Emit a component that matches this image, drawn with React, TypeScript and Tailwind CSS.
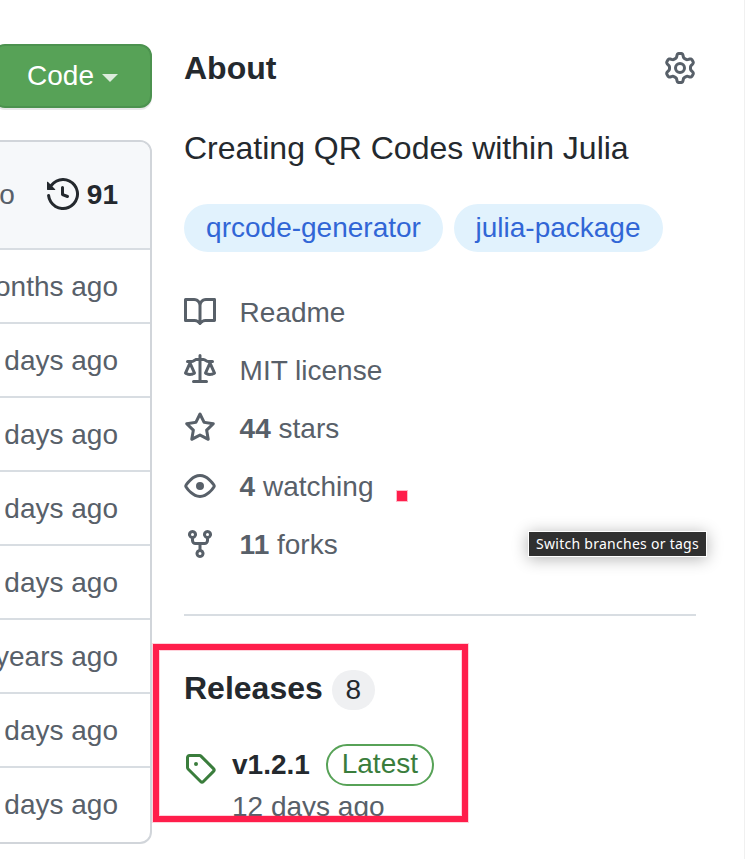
import type { ReactNode } from "react";

const paths = {
  gear: "M7.429 1.525a6.593 6.593 0 011.142 0c.036.003.108.036.137.146l.289 1.105c.147.56.55.967.997 1.189.174.086.341.183.501.29.417.278.97.423 1.53.27l1.102-.303c.11-.03.175.016.195.046.219.31.41.641.573.989.014.031.022.11-.059.19l-.815.806c-.411.406-.562.957-.53 1.456a4.588 4.588 0 010 .582c-.032.499.119 1.05.53 1.456l.815.806c.08.08.073.159.059.19a6.494 6.494 0 01-.573.99c-.02.029-.086.074-.195.045l-1.103-.303c-.559-.153-1.112-.008-1.529.27-.16.107-.327.204-.5.29-.449.222-.851.628-.998 1.189l-.289 1.105c-.029.11-.101.143-.137.146a6.613 6.613 0 01-1.142 0c-.036-.003-.108-.037-.137-.146l-.289-1.105c-.147-.56-.55-.967-.997-1.189a4.502 4.502 0 01-.501-.29c-.417-.278-.97-.423-1.53-.27l-1.102.303c-.11.03-.175-.016-.195-.046a6.492 6.492 0 01-.573-.989c-.014-.031-.022-.11.059-.19l.815-.806c.411-.406.562-.957.53-1.456a4.587 4.587 0 010-.582c.032-.499-.119-1.05-.53-1.456l-.815-.806c-.08-.08-.073-.159-.059-.19a6.44 6.44 0 01.573-.99c.02-.029.086-.075.195-.045l1.103.303c.559.153 1.112.008 1.529-.27.16-.107.327-.204.5-.29.449-.222.851-.628.998-1.189l.289-1.105c.029-.11.101-.143.137-.146zM8 0c-.236 0-.47.01-.701.03-.743.065-1.29.615-1.458 1.261l-.29 1.106c-.017.066-.078.158-.211.224a5.994 5.994 0 00-.668.386c-.123.082-.233.09-.3.071L3.27 2.776c-.644-.177-1.392.02-1.82.63a7.977 7.977 0 00-.704 1.217c-.315.675-.111 1.422.363 1.891l.815.806c.05.048.098.147.088.294a6.084 6.084 0 000 .772c.01.147-.038.246-.088.294l-.815.806c-.474.469-.678 1.216-.363 1.891.2.428.436.835.704 1.218.428.609 1.176.806 1.82.63l1.103-.303c.066-.019.176-.011.299.071.213.143.436.272.668.386.133.066.194.158.212.224l.289 1.106c.169.646.715 1.196 1.458 1.26a8.094 8.094 0 001.402 0c.743-.064 1.29-.614 1.458-1.26l.29-1.106c.017-.066.078-.158.211-.224a5.98 5.98 0 00.668-.386c.123-.082.233-.09.3-.071l1.102.302c.644.177 1.392-.02 1.82-.63.268-.382.505-.789.704-1.217.315-.675.111-1.422-.364-1.891l-.814-.806c-.05-.048-.098-.147-.088-.294a6.1 6.1 0 000-.772c-.01-.147.039-.246.088-.294l.814-.806c.475-.469.679-1.216.364-1.891a7.992 7.992 0 00-.704-1.218c-.428-.609-1.176-.806-1.82-.63l-1.103.303c-.066.019-.176.011-.299-.071a5.991 5.991 0 00-.668-.386c-.133-.066-.194-.158-.212-.224L10.16 1.29C9.99.645 9.444.095 8.701.031A8.094 8.094 0 008 0zm1.5 8a1.5 1.5 0 11-3 0 1.5 1.5 0 013 0zM11 8a3 3 0 11-6 0 3 3 0 016 0z",
  history:
    "M1.643 3.143L.427 1.927A.25.25 0 000 2.104V5.75c0 .138.112.25.25.25h3.646a.25.25 0 00.177-.427L2.715 4.215a6.5 6.5 0 11-1.18 4.458.75.75 0 10-1.493.154 8.001 8.001 0 101.6-5.684zM7.75 4a.75.75 0 01.75.75v2.992l2.028.812a.75.75 0 01-.557 1.392l-2.5-1A.75.75 0 017 8.25v-3.5A.75.75 0 017.75 4z",
  book: "M0 1.75A.75.75 0 01.75 1h4.253c1.227 0 2.317.59 3 1.501A3.744 3.744 0 0111.006 1h4.245a.75.75 0 01.75.75v10.5a.75.75 0 01-.75.75h-4.507a2.25 2.25 0 00-1.591.659l-.622.621a.75.75 0 01-1.06 0l-.622-.621A2.25 2.25 0 005.258 13H.75a.75.75 0 01-.75-.75V1.75zm8.755 3a2.25 2.25 0 012.25-2.25H14.5v9h-3.757c-.71 0-1.4.201-1.992.572l.004-7.322zm-1.504 7.324l.004-5.073-.002-2.253A2.25 2.25 0 005.003 2.5H1.5v9h3.757a3.75 3.75 0 011.994.574z",
  law: "M8.75.75a.75.75 0 00-1.5 0V2h-.984c-.305 0-.604.08-.869.23l-1.288.737A.25.25 0 013.984 3H1.75a.75.75 0 000 1.5h.428L.066 9.192a.75.75 0 00.154.838l.53-.53-.53.53v.001l.002.002.002.002.006.006.016.015.045.04a3.514 3.514 0 00.686.45A4.492 4.492 0 003 11c.88 0 1.556-.22 2.023-.454a3.515 3.515 0 00.686-.45l.045-.04.016-.015.006-.006.002-.002.001-.002L5.25 9.5l.53.53a.75.75 0 00.154-.838L3.822 4.5h.162c.305 0 .604-.08.869-.23l1.289-.737a.25.25 0 01.124-.033h.984V13h-2.5a.75.75 0 000 1.5h6.5a.75.75 0 000-1.5h-2.5V3.5h.984a.25.25 0 01.124.033l1.29.736c.264.152.563.231.868.231h.162l-2.112 4.692a.75.75 0 00.154.838l.53-.53-.53.53v.001l.002.002.002.002.006.006.016.015.045.04a3.517 3.517 0 00.686.45A4.492 4.492 0 0013 11c.88 0 1.556-.22 2.023-.454a3.512 3.512 0 00.686-.45l.045-.04.01-.01.006-.005.006-.006.002-.002.001-.002-.529-.531.53.53a.75.75 0 00.154-.838L13.823 4.5h.427a.75.75 0 000-1.5h-2.234a.25.25 0 01-.124-.033l-1.29-.736A1.75 1.75 0 009.735 2H8.75V.75zM1.695 9.227c.285.135.718.273 1.305.273s1.02-.138 1.305-.273L3 6.327l-1.305 2.9zm10 0c.285.135.718.273 1.305.273s1.02-.138 1.305-.273L13 6.327l-1.305 2.9z",
  star: "M8 .25a.75.75 0 01.673.418l1.882 3.815 4.21.612a.75.75 0 01.416 1.279l-3.046 2.97.719 4.192a.75.75 0 01-1.088.791L8 12.347l-3.766 1.98a.75.75 0 01-1.088-.79l.72-4.194L.818 6.374a.75.75 0 01.416-1.28l4.21-.611L7.327.668A.75.75 0 018 .25zm0 2.445L6.615 5.5a.75.75 0 01-.564.41l-3.097.45 2.24 2.184a.75.75 0 01.216.664l-.528 3.084 2.769-1.456a.75.75 0 01.698 0l2.77 1.456-.53-3.084a.75.75 0 01.216-.664l2.24-2.183-3.096-.45a.75.75 0 01-.564-.41L8 2.694v.001z",
  eye: "M1.679 7.932c.412-.621 1.242-1.75 2.366-2.717C5.175 4.242 6.527 3.5 8 3.5c1.473 0 2.824.742 3.955 1.715 1.124.967 1.954 2.096 2.366 2.717a.119.119 0 010 .136c-.412.621-1.242 1.75-2.366 2.717C10.825 11.758 9.473 12.5 8 12.5c-1.473 0-2.824-.742-3.955-1.715C2.92 9.818 2.09 8.69 1.679 8.068a.119.119 0 010-.136zM8 2c-1.981 0-3.67.992-4.933 2.078C1.797 5.169.88 6.423.43 7.1a1.619 1.619 0 000 1.798c.45.678 1.367 1.932 2.637 3.024C4.329 13.008 6.019 14 8 14c1.981 0 3.67-.992 4.933-2.078 1.27-1.091 2.187-2.345 2.637-3.023a1.619 1.619 0 000-1.798c-.45-.678-1.367-1.932-2.637-3.023C11.671 2.992 9.981 2 8 2zm0 8a2 2 0 100-4 2 2 0 000 4z",
  fork: "M5 3.25a.75.75 0 11-1.5 0 .75.75 0 011.5 0zm0 2.122a2.25 2.25 0 10-1.5 0v.878A2.25 2.25 0 005.75 8.5h1.5v2.128a2.251 2.251 0 101.5 0V8.5h1.5a2.25 2.25 0 002.25-2.25v-.878a2.25 2.25 0 10-1.5 0v.878a.75.75 0 01-.75.75h-4.5A.75.75 0 015 6.25v-.878zm3.75 7.378a.75.75 0 11-1.5 0 .75.75 0 011.5 0zm3-8.75a.75.75 0 100-1.5.75.75 0 000 1.5z",
  tag: "M2.5 7.775V2.75a.25.25 0 01.25-.25h5.025a.25.25 0 01.177.073l6.25 6.25a.25.25 0 010 .354l-5.025 5.025a.25.25 0 01-.354 0l-6.25-6.25a.25.25 0 01-.073-.177zm-1.5 0V2.75C1 1.784 1.784 1 2.75 1h5.025c.464 0 .91.184 1.238.513l6.25 6.25a1.75 1.75 0 010 2.474l-5.026 5.026a1.75 1.75 0 01-2.474 0l-6.25-6.25A1.75 1.75 0 011 7.775zM6 5a1 1 0 100 2 1 1 0 000-2z",
};

function Icon({ name, className = "" }: { name: keyof typeof paths; className?: string }) {
  return (
    <svg viewBox="0 0 16 16" className={`size-8 shrink-0 fill-current ${className}`}>
      <path fillRule="evenodd" d={paths[name]} />
    </svg>
  );
}

const ages = [
  "2 months ago",
  "12 days ago",
  "12 days ago",
  "12 days ago",
  "12 days ago",
  "2 years ago",
  "12 days ago",
  "12 days ago",
];

function Meta({ icon, children }: { icon: keyof typeof paths; children: ReactNode }) {
  return (
    <li className="flex h-[42px] items-center gap-6">
      <Icon name={icon} className="-mt-0.5" />
      <span className="-ml-[0.4px]">{children}</span>
    </li>
  );
}

export default function App() {
  return (
    <div className="relative flex h-[859px] w-[745px] overflow-hidden border-r border-[#f0f0f0] bg-white font-['Liberation_Sans',Arial,sans-serif] text-[28px] leading-[42px] text-[#24292e]">
      <div className="flex w-[152px] shrink-0 flex-col items-end pt-11">
        <button className="flex h-16 w-[159px] shrink-0 items-center justify-end gap-2 rounded-xl border-2 border-[#4c924f] bg-[#57a257] pr-8 text-white shadow-[0_2px_0_rgba(27,31,35,0.1)]">
          Code
          <span className="mt-1 border-x-8 border-t-8 border-x-transparent border-t-white/80" />
        </button>
        <section className="mt-8 w-[400px] shrink-0 overflow-hidden rounded-xl border-2 border-[#d1d5da] text-right text-[#586069]">
          <header className="flex h-[106px] items-center justify-end bg-[#f6f8fa] pr-8">
            <span className="mr-8">12 days ago</span>
            <Icon name="history" className="mr-2 -mt-0.5 text-[#24292e]" />
            <strong className="text-[#24292e]">91</strong>
          </header>
          {ages.map((age, i) => (
            <div key={i} className="h-[74px] border-t-2 border-[#d8dde2] pt-4 pr-8 whitespace-nowrap last:h-[76px]">
              {age}
            </div>
          ))}
        </section>
      </div>

      <aside className="ml-8 w-[512px] shrink-0 pt-11">
        <div className="flex h-12 items-center justify-between">
          <h2 className="text-[32px] leading-12 font-bold">About</h2>
          <Icon name="gear" className="text-[#586069]" />
        </div>
        <p className="mt-8 text-[32px] leading-12">Creating QR Codes within Julia</p>
        <div className="mt-8 flex gap-[11px] text-[#3166d6]">
          <span className="flex h-12 w-[259px] items-center justify-center rounded-full bg-[#e1f2fd]">qrcode-generator</span>
          <span className="flex h-12 w-[209px] items-center justify-center rounded-full bg-[#e1f2fd] pr-px">julia-package</span>
        </div>
        <ul className="mt-10 flex flex-col gap-4 text-[#586069]">
          <Meta icon="book">Readme</Meta>
          <Meta icon="law">MIT license</Meta>
          <Meta icon="star"><b>44</b> stars</Meta>
          <Meta icon="eye"><b>4</b> watching</Meta>
          <Meta icon="fork"><b>11</b> forks</Meta>
        </ul>
        <hr className="mt-12 border-t-2 border-[#d8dde2]" />
        <div className="mt-12 flex h-12 items-center">
          <h2 className="text-[32px] leading-12 font-bold">Releases</h2>
          <span className="mt-1 ml-[9px] flex h-10 w-[43px] items-center justify-center rounded-full bg-[#eff0f2]">8</span>
        </div>
        <div className="mt-8 flex">
          <Icon name="tag" className="mt-2 text-[#3a7d3c]" />
          <div className="ml-4">
            <div className="flex items-center">
              <strong>v1.2.1</strong>
              <span className="ml-4 flex h-[42px] w-[108px] items-center justify-center rounded-full border-2 border-[#57a257] pb-0.5 leading-9 text-[#3a7d3c]">Latest</span>
            </div>
            <p className="text-[#586069]">12 days ago</p>
          </div>
        </div>
      </aside>

      <div className="absolute top-[491px] left-[397px] h-[10px] w-[10px] bg-[#ff1e4b] shadow-[0_0_0_1px_rgba(255,30,75,0.3)]" />
      <div className="absolute top-[644px] left-[153px] h-[178px] w-[315px] border-6 border-[#ff1e4b] shadow-[0_0_0_1px_rgba(255,30,75,0.2),inset_0_0_0_1px_rgba(255,30,75,0.2)]" />
      <div className="absolute top-[531px] left-[528px] flex h-[26px] w-[179px] items-center justify-center border border-white bg-[#303030] font-['Noto_Sans',sans-serif] text-[14px] leading-5 tracking-[0.27px] whitespace-nowrap text-white shadow-[0_2px_16px_rgba(0,0,0,0.3)]">
        Switch branches or tags
      </div>
    </div>
  );
}
